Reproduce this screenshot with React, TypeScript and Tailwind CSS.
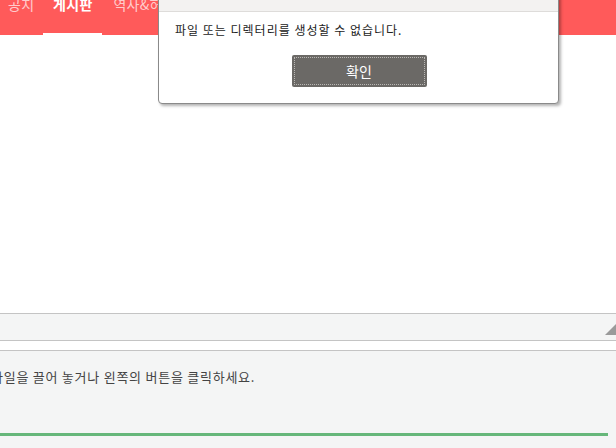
export default function App() {
  const font = { fontFamily: '"Noto Sans CJK KR", "Noto Sans", sans-serif' };
  return (
    <div className="relative h-[448px] w-[616px] overflow-hidden bg-white" style={font}>
      {/* top tab bar */}
      <header className="flex h-[35px] bg-[#ff5a5a]">
        <nav className="flex text-[14px] leading-none tracking-[0.3px]">
          <a className="-mt-[3px] px-2 text-white/70">공지</a>
          <a className="relative -mt-[3px] ml-[1px] w-[59px] text-center font-bold text-white">
            게시판
            <span className="absolute left-0 right-0 top-[36px] h-[2px] bg-white" />
          </a>
          <a className="-mt-[3px] ml-[11px] text-white/70">역사&허브</a>
        </nav>
      </header>

      <div className="h-[278px]" />

      {/* toolbar strip */}
      <div className="relative h-[28px] border-y border-[#c4c4c4] bg-[#f4f5f5]">
        <svg className="absolute right-0 top-[10px]" width="11" height="11" viewBox="0 0 11 11">
          <polygon points="11,0 11,11 0,11" fill="#9a9a9a" />
        </svg>
      </div>
      <div className="h-[10px] border-b border-[#c4c4c4]" />

      {/* drop zone */}
      <div className="relative h-[97px] bg-[#f4f5f5]">
        <p className="-ml-[9px] pt-[16px] text-[13px] tracking-[0.75px] text-[#444]">
          파일을 끌어 놓거나 왼쪽의 버튼을 클릭하세요.
        </p>
        <div className="absolute left-0 top-[82px] h-[3px] w-[608px] bg-[#66b77a]" />
      </div>

      {/* alert dialog */}
      <div className="absolute left-[158px] top-[-20px] w-[401px] rounded-b-[4px] border border-[#8a8a8a] bg-white shadow-[2px_2px_3px_rgba(0,0,0,0.3)]">
        <div className="h-[31px] border-b border-[#dedcda] bg-[#f3f2f1]" />
        <p className="pl-[16px] pt-[10px] text-[12px] leading-[16px] tracking-[1px] text-[#222]">
          파일 또는 디렉터리를 생성할 수 없습니다.
        </p>
        <div className="flex justify-center pb-[16px] pt-[17px]">
          <button className="ml-[1px] flex h-[32px] w-[135px] items-center justify-center rounded-[2px] bg-[#6b6966] p-[2px]">
            <span className="flex h-full w-full items-center justify-center border border-dotted border-[#b9b7b4] text-[14px] text-white">
              확인
            </span>
          </button>
        </div>
      </div>
    </div>
  );
}
